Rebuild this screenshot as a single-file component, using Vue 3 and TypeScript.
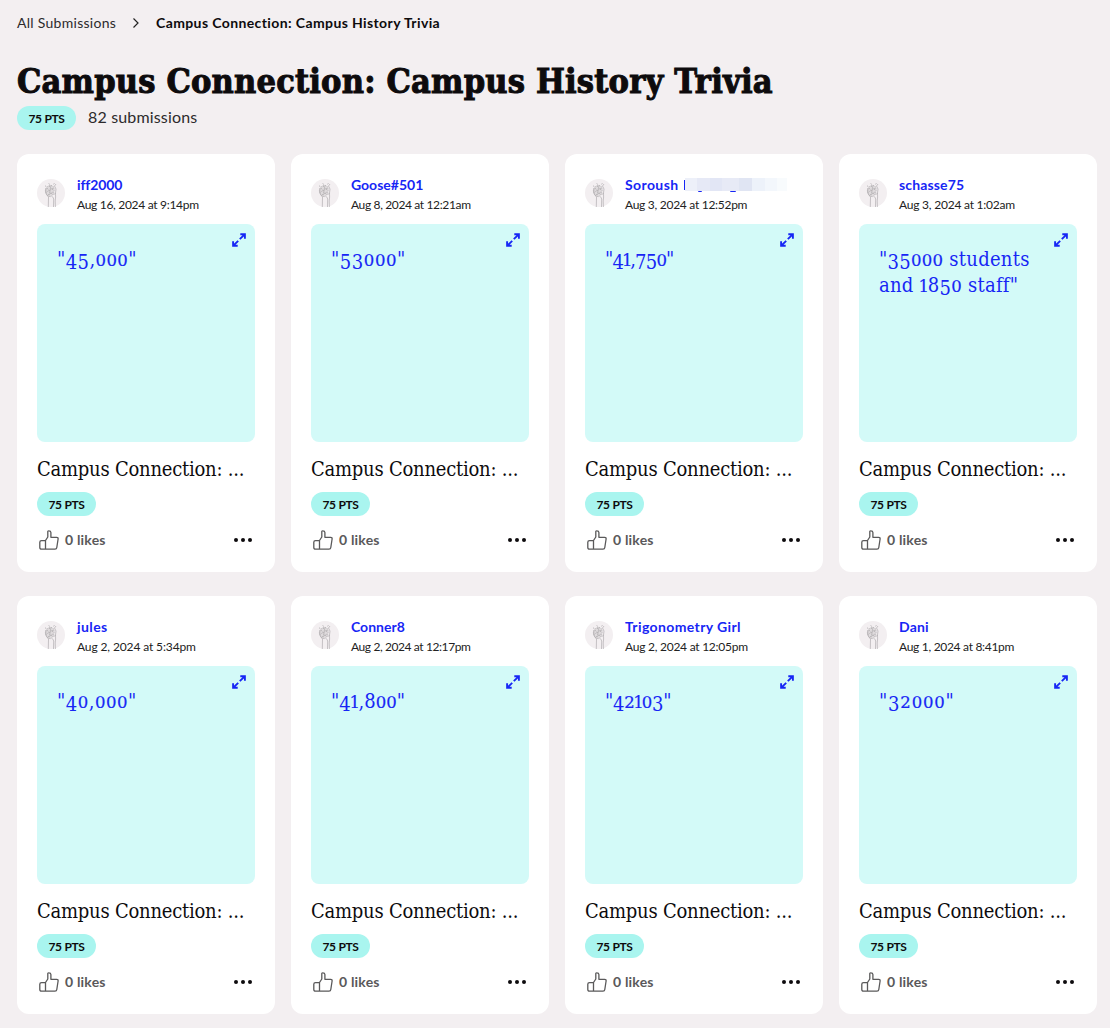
<script setup lang="ts">
interface Submission {
  user: string
  date: string
  answer: string[]
  redacted?: boolean
  // tracking, in px, of the user name, the date and the answer
  us: number
  ds: number
  as: number
}

const submissions: Submission[] = [
  { user: 'iff2000', date: 'Aug 16, 2024 at 9:14pm', answer: ['"45,000"'], us: -0.1, ds: -0.3, as: 0.4 },
  { user: 'Goose#501', date: 'Aug 8, 2024 at 12:21am', answer: ['"53000"'], us: 0, ds: -0.36, as: 0.55 },
  { user: 'Soroush', date: 'Aug 3, 2024 at 12:52pm', answer: ['"41,750"'], redacted: true, us: 0.4, ds: -0.28, as: -0.8 },
  { user: 'schasse75', date: 'Aug 3, 2024 at 1:02am', answer: ['"35000 students', 'and 1850 staff"'], us: 0.15, ds: -0.22, as: 0.27 },
  { user: 'jules', date: 'Aug 2, 2024 at 5:34pm', answer: ['"40,000"'], us: 0.4, ds: -0.12, as: 0.5 },
  { user: 'Conner8', date: 'Aug 2, 2024 at 12:17pm', answer: ['"41,800"'], us: 0, ds: -0.4, as: 0 },
  { user: 'Trigonometry Girl', date: 'Aug 2, 2024 at 12:05pm', answer: ['"42103"'], us: 0.38, ds: -0.25, as: -0.3 },
  { user: 'Dani', date: 'Aug 1, 2024 at 8:41pm', answer: ['"32000"'], us: 0.2, ds: -0.3, as: 0.8 },
]

// Old-style figures: 0-2 sit at x-height, 3 4 5 7 9 hang below the baseline.
function runs(line: string) {
  return (line.match(/1|[02]+|[34579]+|[^0-57 9]+|\s+/g) ?? []).map((text) => ({
    text,
    kind: text === '1' ? 'small one' : /^[02]/.test(text) ? 'small' : /^[34579]/.test(text) ? 'hang' : 'plain',
  }))
}
</script>

<template>
  <main class="page">
    <nav class="crumbs">
      <span class="crumb-link">All Submissions</span>
      <svg class="chevron" width="8" height="12" viewBox="0 0 8 12"><path d="M1.500 1.500 6 6 1.500 10.500" /></svg>
      <span class="crumb-current">Campus Connection: Campus History Trivia</span>
    </nav>
    <h1 class="title">Campus Connection: Campus History Trivia</h1>
    <div class="meta">
      <span class="pill"><span>75 PTS</span></span>
      <span class="count">82 submissions</span>
    </div>
    <section class="grid">
      <article v-for="s in submissions" :key="s.user" class="card">
        <header class="head">
          <svg class="avatar" width="28" height="28" viewBox="0 0 28 28">
            <circle cx="14" cy="14" r="14" fill="#f3eff1" />
            <path class="globe" d="M9 9.500 11 7l3-.8 2.500 1.500 .8 3-.8 4-2.500 3-3-.5-2.200-3zM10 9l5 6M14 6.500l-2 10M9.500 13l7-4M11 16l5-3M12 7l4 4" />
            <path class="arms" d="M9 9 8.300 12 9.500 15.500 11.500 18 11.300 28M15.500 17.500 16.700 20 16.500 28M16.500 16 18.500 14 19 10 17.500 7 19 5M18.500 14 18.600 18 18.200 22 18.400 28M9 8 8.500 6.500M13 5.500 11.500 4.500M16.500 5.500 17.500 4" />
          </svg>
          <div class="who">
            <div class="user">
              <span :style="{ letterSpacing: s.us + 'px' }">{{ s.user }}</span>
              <span v-if="s.redacted" class="redacted"><i class="stem"></i><i class="mask"></i><i class="tail t1"></i><i class="tail t2"></i></span>
            </div>
            <div class="date"><span :style="{ letterSpacing: s.ds + 'px' }">{{ s.date }}</span></div>
          </div>
        </header>
        <div class="answer">
          <div v-for="line in s.answer" :key="line" class="line">
            <span :style="{ letterSpacing: s.as + 'px' }"><span v-for="(r, i) in runs(line)" :key="i" :class="r.kind">{{ r.text }}</span></span>
          </div>
          <svg class="expand" width="14" height="14" viewBox="0 0 14 14">
            <path d="M8.300 1.200H12.900V5.800M12.700 1.300 7.800 6.200M5.700 12.800H1.100V8.200M1.300 12.700l4.900-4.900" />
          </svg>
        </div>
        <h2 class="name"><span>Campus Connection: ...</span></h2>
        <span class="pill"><span>75 PTS</span></span>
        <footer class="foot">
          <svg class="thumb" width="20" height="20" viewBox="0 0 20 20">
            <path d="M6.500 10.500 8.800 7V2.300Q8.600 .8 9.800 .8 11.800 .8 11.900 2.500V7.300H17.700Q19.300 7.300 19.100 9L17.800 17.500Q17.600 19.200 16 19.200H2.500Q.8 19.200 .8 17.500V12.200Q.8 10.700 2.500 10.700H6.500ZM6.500 10.700V19" />
          </svg>
          <span class="likes">0 likes</span>
          <svg class="dots" width="18" height="4" viewBox="0 0 18 4"><circle cx="2" cy="2" r="2" /><circle cx="9" cy="2" r="2" /><circle cx="16" cy="2" r="2" /></svg>
        </footer>
      </article>
    </section>
  </main>
</template>

<style>
body { margin: 0; background: #f3eff1; }
</style>

<style scoped>
.page {
  box-sizing: border-box;
  width: 1110px;
  height: 1028px;
  overflow: hidden;
  padding: 12px 13px 0 17px;
  background: #f3eff1;
  color: #0d0b0d;
  font-family: Lato, sans-serif;
  white-space: nowrap;
}
.crumbs { display: flex; align-items: center; height: 20px; font-size: 14px; }
.crumb-link { width: 99px; letter-spacing: 0.28px; color: #2c2a2c; }
.chevron { position: relative; top: 1px; margin: 0 16px 0 16px; fill: none; stroke: #222; stroke-width: 1.2; }
.crumb-current { font-weight: 700; letter-spacing: 0.39px; }
.title {
  margin: 28px 0 0;
  height: 42px;
  font: 700 34px/42px "DejaVu Serif Condensed", "DejaVu Serif", serif;
  font-stretch: condensed;
  letter-spacing: 0.2px;
  -webkit-text-stroke: 1px;
}
.meta { display: flex; align-items: center; height: 24px; margin-top: 4px; }
.count { margin-left: 12px; font-size: 16px; line-height: 20px; padding-bottom: 2px; letter-spacing: 0.16px; color: #2c2a2c; }
.pill {
  display: flex;
  align-items: center;
  justify-content: center;
  width: 59px;
  height: 24px;
  border-radius: 12px;
  background: #a9f5ef;
  font-size: 12px;
  font-weight: 700;
  letter-spacing: -0.45px;
  word-spacing: 0.6px;
}
.grid { display: grid; grid-template-columns: repeat(4, 258px); gap: 24px 16px; margin-top: 24px; }
.card { box-sizing: border-box; height: 418px; padding: 20px 20px 0; border-radius: 12px; background: #fff; }
.head { display: flex; height: 50px; }
.avatar { flex: none; margin: 5px 12px 0 0; }
.globe { fill: #dedadc; stroke: #969395; stroke-width: 0.45; stroke-dasharray: 1.5 0.6; }
.arms { fill: none; stroke: #a5a1a4; stroke-width: 0.6; }
.user { display: flex; align-items: center; height: 20px; color: #1726f5; font-size: 14px; font-weight: 700; }
.date { height: 21px; line-height: 22px; font-size: 12px; color: #222; }
.redacted { position: relative; width: 103px; height: 14px; margin-left: 5px; }
.redacted i { position: absolute; }
.stem { left: 0; top: 3px; width: 1px; height: 10px; background: #1726f5; }
.mask {
  left: 1px; top: 1px; width: 102px; height: 13px;
  background: linear-gradient(90deg, #edf0f9 0 12px, #e6e9f6 12px 25px, #e2e6f5 25px 37px, #e7eaf6 37px 54px, #e0e5f3 54px 67px, #edf2fa 67px 80px, #f3f7fc 80px 92px, #f8fbfd 92px);
}
.tail { top: 14px; width: 4px; height: 1px; background: #1726f5; border-radius: 0 0 2px 2px; }
.t1 { left: 14px; }
.t2 { left: 46px; width: 6px; }
.answer {
  position: relative;
  box-sizing: border-box;
  height: 218px;
  padding: 22px 20px;
  border-radius: 8px;
  background: #d3faf8;
  color: #1726f5;
  font: 20px/26px "DejaVu Serif Condensed", "DejaVu Serif", serif;
  font-stretch: condensed;
}
.line { height: 26px; }
.line span { white-space: pre; }
.small { font-family: "DejaVu Serif", serif; font-stretch: normal; font-size: 16.5px; line-height: 1; -webkit-text-stroke: 0.2px; }
.one { margin: 0 -1.5px 0 -1.2px; }
.hang { position: relative; top: 3px; }
.expand { position: absolute; top: 9px; right: 9px; fill: none; stroke: #1726f5; stroke-width: 1.9; }
.name {
  margin: 14px 0 10px;
  height: 26px;
  font: 400 20px/26px "DejaVu Serif Condensed", "DejaVu Serif", serif;
  font-stretch: condensed;
  letter-spacing: -0.24px;
}
.foot { display: flex; align-items: center; height: 24px; margin-top: 12px; padding: 0 3px 0 2px; }
.thumb { fill: none; stroke: #5a595a; stroke-width: 1.3; stroke-linejoin: round; }
.likes { margin-left: 6px; padding-bottom: 2px; font-size: 14px; font-weight: 700; letter-spacing: 0.2px; color: #5a595a; }
.dots { margin-left: auto; fill: #0d0b0d; }
</style>
